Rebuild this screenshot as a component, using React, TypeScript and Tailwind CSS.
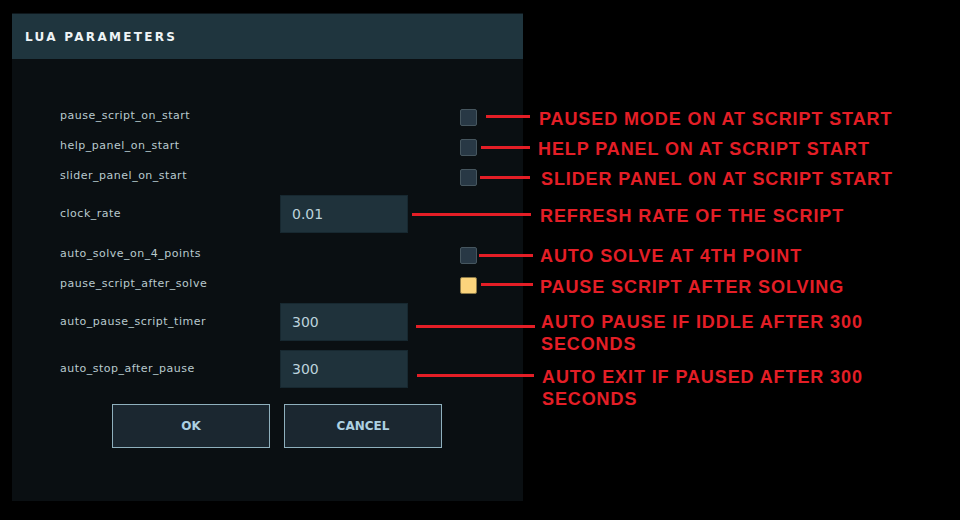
import * as React from "react"

const rows: { label: string; kind: "check" | "input"; value?: string; checked?: boolean; h: string; mt: string }[] = [
  { label: "pause_script_on_start", kind: "check", h: "h-[30px]", mt: "mt-0" },
  { label: "help_panel_on_start", kind: "check", h: "h-[30px]", mt: "mt-0" },
  { label: "slider_panel_on_start", kind: "check", h: "h-[30px]", mt: "mt-0" },
  { label: "clock_rate", kind: "input", value: "0.01", h: "h-[38px]", mt: "mt-[4px]" },
  { label: "auto_solve_on_4_points", kind: "check", h: "h-[30px]", mt: "mt-[6px]" },
  { label: "pause_script_after_solve", kind: "check", checked: true, h: "h-[30px]", mt: "mt-0" },
  { label: "auto_pause_script_timer", kind: "input", value: "300", h: "h-[38px]", mt: "mt-[4px]" },
  { label: "auto_stop_after_pause", kind: "input", value: "300", h: "h-[38px]", mt: "mt-[9px]" },
]

// red callouts drawn over the screenshot
const notes = [
  { x1: 486, x2: 530, y: 116, tx: 539, ty: 119, text: ["PAUSED MODE ON AT SCRIPT START"] },
  { x1: 481, x2: 530, y: 147, tx: 538, ty: 149, text: ["HELP PANEL ON AT SCRIPT START"] },
  { x1: 480, x2: 530, y: 177, tx: 541, ty: 179, text: ["SLIDER PANEL ON AT SCRIPT START"] },
  { x1: 412, x2: 531, y: 214, tx: 540, ty: 216, text: ["REFRESH RATE OF THE SCRIPT"] },
  { x1: 479, x2: 533, y: 255, tx: 540, ty: 256, text: ["AUTO SOLVE AT 4TH POINT"] },
  { x1: 481, x2: 533, y: 284, tx: 540, ty: 287, text: ["PAUSE SCRIPT AFTER SOLVING"] },
  { x1: 416, x2: 535, y: 326, tx: 541, ty: 322, text: ["AUTO PAUSE IF IDDLE AFTER 300", "SECONDS"] },
  { x1: 417, x2: 534, y: 375, tx: 542, ty: 377, text: ["AUTO EXIT IF PAUSED AFTER 300", "SECONDS"] },
]

function Checkbox({ checked }: { checked?: boolean }) {
  return (
    <div
      className={
        checked
          ? "w-[17px] h-[17px] rounded-[2px] border border-[#8c7a48] bg-[#fbd47c]"
          : "w-[17px] h-[17px] rounded-[2px] border border-[#46565f] bg-[#283845]"
      }
    />
  )
}

export default function App() {
  return (
    <div className="relative w-[960px] h-[520px] bg-black overflow-hidden">
      <div className="ml-[12px] pt-[13px]">
        <div className="w-[511px] h-[488px] bg-[#0a0f12] border-t border-[#0e171c] flex flex-col">
          <div className="h-[45px] bg-[#1f353e] flex items-center pl-[13px]">
            <span className="text-[12px] font-bold tracking-[2.3px] text-[#eef4f6] font-['DejaVu_Sans',sans-serif]">
              LUA PARAMETERS
            </span>
          </div>
          <div className="flex flex-col pt-[42px]">
            {rows.map((r) => (
              <div key={r.label} className={`flex items-center ${r.h} ${r.mt}`}>
                <span className="w-[268px] shrink-0 pl-[48px] text-[11px] text-[#b9cace] font-['DejaVu_Sans',sans-serif] tracking-[0.5px]">
                  {r.label}
                </span>
                {r.kind === "input" ? (
                  <div className="w-[128px] h-full bg-[#1f323b] border border-[#172830] flex items-center pl-[11px] text-[14px] text-[#bcd3dc] font-['DejaVu_Sans',sans-serif]">
                    {r.value}
                  </div>
                ) : (
                  <div className="ml-[180px] pt-[3px]">
                    <Checkbox checked={r.checked} />
                  </div>
                )}
              </div>
            ))}
            <div className="flex gap-[14px] pl-[100px] mt-[16px]">
              <div className="w-[158px] h-[44px] bg-[#1b2730] border border-[#8fb0bd] flex items-center justify-center text-[12px] font-bold text-[#acd0e2] font-['DejaVu_Sans',sans-serif]">
                OK
              </div>
              <div className="w-[158px] h-[44px] bg-[#1b2730] border border-[#8fb0bd] flex items-center justify-center text-[12px] font-bold text-[#acd0e2] font-['DejaVu_Sans',sans-serif]">
                CANCEL
              </div>
            </div>
          </div>
        </div>
      </div>

      {notes.map((n, i) => (
        <React.Fragment key={i}>
          <div
            className="absolute h-[3px] bg-[#e41e26]"
            style={{ left: n.x1, top: n.y - 1, width: n.x2 - n.x1 }}
          />
          <div
            className="absolute text-[18px] leading-[22px] font-bold tracking-[0.9px] text-[#e41e26] font-['Liberation_Sans',Arial,sans-serif] whitespace-nowrap"
            style={{ left: n.tx, top: n.ty - 11 }}
          >
            {n.text.map((t) => (
              <div key={t}>{t}</div>
            ))}
          </div>
        </React.Fragment>
      ))}
    </div>
  )
}
